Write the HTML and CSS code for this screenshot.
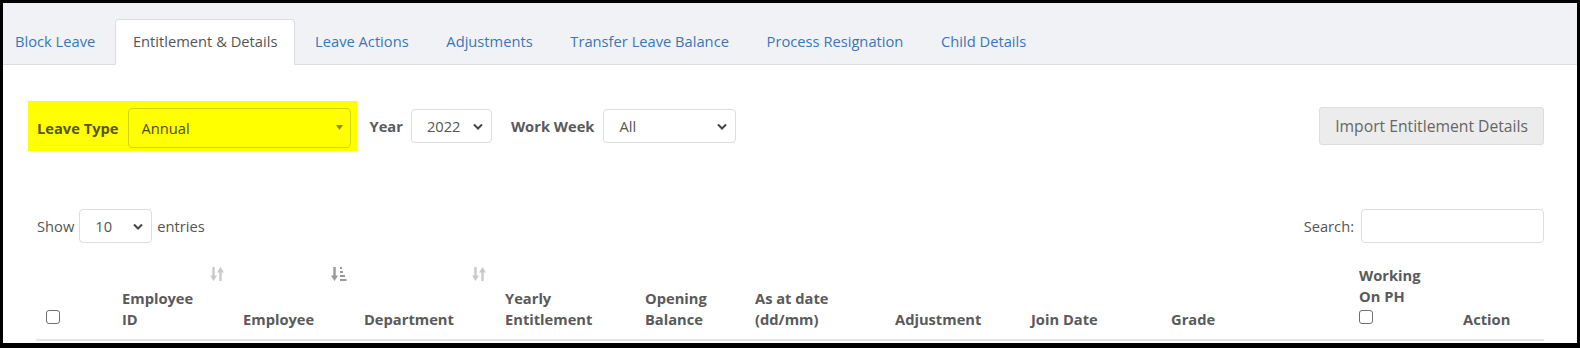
FILE: index.html
```html
<!DOCTYPE html>
<html lang="en">
<head>
<meta charset="utf-8">
<title>Entitlement &amp; Details</title>
<link rel="stylesheet" href="styles.css">
</head>
<body>
<div class="frame">
  <ul class="tabs">
    <li><a href="#">Block Leave</a></li>
    <li class="active"><a href="#">Entitlement &amp; Details</a></li>
    <li><a href="#">Leave Actions</a></li>
    <li><a href="#">Adjustments</a></li>
    <li><a href="#">Transfer Leave Balance</a></li>
    <li><a href="#">Process Resignation</a></li>
    <li><a href="#">Child Details</a></li>
  </ul>
  <div class="panel">
    <div class="filters">
      <div class="highlight">
        <label class="flabel">Leave Type</label>
        <span class="selwrap type-wrap">
          <select class="sel sel-type"><option>Annual</option></select>
          <svg class="tri" width="7" height="5" viewBox="0 0 7 5"><path d="M0 0H7L3.5 5Z"/></svg>
        </span>
      </div>
      <label class="flabel year-label">Year</label>
      <span class="selwrap">
        <select class="sel sel-year"><option>2022</option></select>
        <svg class="chev" width="10" height="7" viewBox="0 0 10 7"><path d="M1 1.5L5 5.5L9 1.5"/></svg>
      </span>
      <label class="flabel week-label">Work Week</label>
      <span class="selwrap">
        <select class="sel sel-week"><option>All</option></select>
        <svg class="chev" width="10" height="7" viewBox="0 0 10 7"><path d="M1 1.5L5 5.5L9 1.5"/></svg>
      </span>
      <button class="import">Import Entitlement Details</button>
    </div>

    <div class="dt-top">
      <div class="length">
        <span>Show</span>
        <span class="selwrap">
          <select class="sel sel-len"><option>10</option></select>
          <svg class="chev" width="10" height="7" viewBox="0 0 10 7"><path d="M1 1.5L5 5.5L9 1.5"/></svg>
        </span>
        <span>entries</span>
      </div>
      <div class="search">
        <span>Search:</span>
        <input class="search-input" type="text">
      </div>
    </div>

    <table class="grid">
      <colgroup>
        <col class="w-cb"><col class="w-id"><col class="w-emp"><col class="w-dept"><col class="w-year"><col class="w-open"><col class="w-date"><col class="w-adj"><col class="w-join"><col class="w-grade"><col class="w-ph"><col class="w-act">
      </colgroup>
      <thead>
        <tr>
          <th><input type="checkbox" class="cb"></th>
          <th class="sortable">Employee<br>ID
            <svg class="sort" width="16" height="16" viewBox="0 0 16 16"><path class="ln" d="M4.5 1V11M11.5 15V5"/><path d="M1 9.5H8L4.5 15Z M8 6.5H15L11.5 1Z"/></svg>
          </th>
          <th class="sortable">Employee
            <svg class="sort active" width="17" height="16" viewBox="0 0 17 16"><path class="ln" d="M4.5 1V11"/><path d="M1 9.5H8L4.5 15Z"/><rect x="10" y="1" width="2" height="2"/><rect x="10" y="5" width="3" height="2"/><rect x="10" y="9" width="5" height="2"/><rect x="10" y="13" width="6.5" height="2"/></svg>
          </th>
          <th class="sortable">Department
            <svg class="sort" width="16" height="16" viewBox="0 0 16 16"><path class="ln" d="M4.5 1V11M11.5 15V5"/><path d="M1 9.5H8L4.5 15Z M8 6.5H15L11.5 1Z"/></svg>
          </th>
          <th>Yearly<br>Entitlement</th>
          <th>Opening<br>Balance</th>
          <th>As at date<br>(dd/mm)</th>
          <th>Adjustment</th>
          <th>Join Date</th>
          <th>Grade</th>
          <th>Working<br>On PH<input type="checkbox" class="cb cb-ph"></th>
          <th>Action</th>
        </tr>
      </thead>
    </table>
  </div>
</div>
</body>
</html>
```

FILE: styles.css
```css
* { box-sizing: border-box; }

html, body {
  margin: 0;
  padding: 0;
  background: #ffffff;
}

body {
  font-family: "Open Sans", "Liberation Sans", Arial, sans-serif;
  font-size: 14.7px;
  color: #555555;
}

.frame {
  width: 1580px;
  height: 348px;
  border-style: solid;
  border-color: #000000;
  border-width: 3px 3px 5px 3px;
  overflow: hidden;
  background: #ffffff;
}

/* ---------- tabs ---------- */
.tabs {
  list-style: none;
  margin: 0 0 0 -6px;
  padding: 16px 0 0 0;
  display: flex;
  background: #f1f2f6;
  border-bottom: 1px solid #dddddd;
}

.tabs li {
  margin-right: 1.7px;
  margin-bottom: -1px;
}

.tabs a {
  display: block;
  height: 46px;
  line-height: 42px;
  padding: 0 17px;
  border: 1px solid transparent;
  border-radius: 4px 4px 0 0;
  color: #3a77b6;
  text-decoration: none;
  font-size: 14.7px;
}

.tabs li.active a {
  background: #ffffff;
  color: #555555;
  border-color: #dddddd #dddddd transparent;
}

/* ---------- panel ---------- */
.panel {
  padding: 0 33px 0 33px;
}

.filters {
  display: flex;
  align-items: center;
  margin-top: 36px;
  height: 50px;
}

.highlight {
  display: flex;
  align-items: center;
  background: #ffff00;
  height: 50px;
  margin-left: -8px;
  padding: 4px 6px 0 9px;
}

.flabel {
  font-weight: 700;
  font-size: 14.7px;
  color: #5a5a5a;
}

.highlight .flabel {
  color: #56561c;
  margin-right: 9px;
}

.selwrap {
  position: relative;
  display: inline-block;
}

.sel {
  appearance: none;
  -webkit-appearance: none;
  font-family: "Open Sans", "Liberation Sans", Arial, sans-serif;
  font-size: 14.7px;
  color: #555555;
  background: #ffffff;
  border: 1px solid #dddddd;
  border-radius: 4px;
  height: 34px;
  padding: 0 0 0 15px;
  margin: 0;
  display: block;
}

.sel-type {
  width: 223px;
  height: 40px;
  background: transparent;
  border-color: #d4d400;
  color: #4c4c0a;
  padding-left: 13px;
}

.tri {
  position: absolute;
  right: 8px;
  top: 17px;
  fill: #8a8a3a;
}

.chev {
  position: absolute;
  right: 9px;
  top: 14px;
  fill: none;
  stroke: #444444;
  stroke-width: 2;
}

.year-label { margin-left: 13px; margin-right: 8px; }
.sel-year { width: 81px; }

.week-label { margin-left: 19px; margin-right: 9px; }
.sel-week { width: 133px; }

.import {
  margin-left: auto;
  height: 38px;
  padding: 0 15px;
  font-family: "Open Sans", "Liberation Sans", Arial, sans-serif;
  font-size: 15.7px;
  color: #666666;
  background: #ececec;
  border: 1px solid #dddddd;
  border-radius: 3px;
}

/* ---------- datatable top ---------- */
.dt-top {
  display: flex;
  justify-content: space-between;
  align-items: center;
  margin-top: 58px;
  height: 34px;
}

.length, .search {
  display: flex;
  align-items: center;
  color: #555555;
}

.length > span:first-child { margin-left: 1px; }
.length .selwrap { margin: 0 5px 0 5px; }
.sel-len { width: 73px; }

.search-input {
  margin-left: 7px;
  width: 183px;
  height: 34px;
  border: 1px solid #dddddd;
  border-radius: 4px;
}

/* ---------- table ---------- */
.grid {
  margin-top: 14px;
  width: 1508px;
  table-layout: fixed;
  border-collapse: collapse;
}

.w-cb { width: 76px; }
.w-id { width: 121px; }
.w-emp { width: 121px; }
.w-dept { width: 141px; }
.w-year { width: 140px; }
.w-open { width: 110px; }
.w-date { width: 140px; }
.w-adj { width: 136px; }
.w-join { width: 140px; }
.w-grade { width: 188px; }
.w-ph { width: 104px; }
.w-act { width: 91px; }

.grid th {
  position: relative;
  text-align: left;
  vertical-align: bottom;
  font-weight: 700;
  font-size: 14.7px;
  line-height: 21px;
  color: #5a5a5a;
  padding: 8px 10px 9px 10px;
  border-bottom: 2px solid #e4e4e4;
}

.cb {
  appearance: none;
  -webkit-appearance: none;
  display: block;
  width: 14px;
  height: 14px;
  margin: 0 0 6px 0;
  border: 1px solid #6f6f6f;
  border-radius: 3px;
  background: #ffffff;
}

.cb-ph { margin-top: 3px; }

.sort {
  position: absolute;
  top: 9px;
  right: 8px;
  fill: #c9c9c9;
}

.sort .ln {
  stroke: #c9c9c9;
  stroke-width: 2.4;
  fill: none;
}

.sort.active { fill: #999999; right: 7px; }
.sort.active .ln { stroke: #999999; }
```
